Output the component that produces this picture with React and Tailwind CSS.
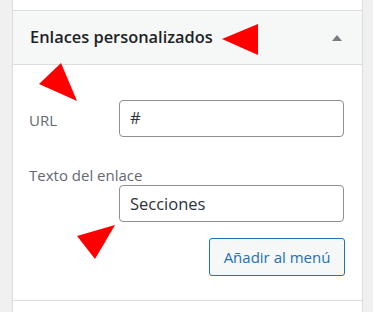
export default function App() {
  return (
    <div className="relative w-[373px] h-[312px] bg-[#f0f0f1] overflow-hidden" style={{ fontFamily: '"Open Sans", "Noto Sans", sans-serif' }}>
      <div className="ml-[12px] w-[351px] h-full bg-white border-x border-[#dcdcde] flex flex-col">
        <div className="h-[10px] bg-white"></div>
        <div className="h-[55px] bg-[#f6f7f7] border-y border-[#dcdcde] flex items-center justify-between pl-[17px] pr-[20px]">
          <span className="text-[16.4px] font-semibold text-[#1d2327]">Enlaces personalizados</span>
          <svg width="10" height="6" viewBox="0 0 10 6"><path d="M0 6 L5 0 L10 6 Z" fill="#787c82" /></svg>
        </div>
        <div className="h-[235px] pl-[16px] pr-[18px] pt-[35px] flex flex-col">
          <div className="flex items-center justify-between">
            <span className="text-[15px] text-[#646970] mt-[4px]">URL</span>
            <div className="w-[225px] h-[37px] border border-[#8c8f94] rounded-[4px] flex items-center px-[10px] text-[16.5px] text-[#2c3338]">#</div>
          </div>
          <div className="mt-[27px] text-[15px] text-[#646970] leading-[20px] pt-[1px] -mb-[1px]">Texto del enlace</div>
          <div className="flex justify-end mt-[1px]">
            <div className="w-[225px] h-[37px] border border-[#8c8f94] rounded-[4px] flex items-center px-[10px] pt-[2px] text-[16.5px] text-[#2c3338]">Secciones</div>
          </div>
          <div className="flex justify-end mt-[16px] -mr-[1px]">
            <div className="w-[136px] h-[38px] border border-[#2271b1] rounded-[3px] bg-[#f6f7f7] flex items-center justify-center text-[15px] text-[#2271b1]">Añadir al menú</div>
          </div>
        </div>
        <div className="flex-1 border-t border-[#dcdcde] bg-white"></div>
      </div>
      <svg className="absolute left-0 top-0 pointer-events-none" width="373" height="312">
        <polygon points="222,39 258,24 258,55" fill="#ff0000" />
        <polygon points="61,63 39,84 77,101" fill="#ff0000" />
        <polygon points="77,236 115,225 95,259" fill="#ff0000" />
      </svg>
    </div>
  );
}
